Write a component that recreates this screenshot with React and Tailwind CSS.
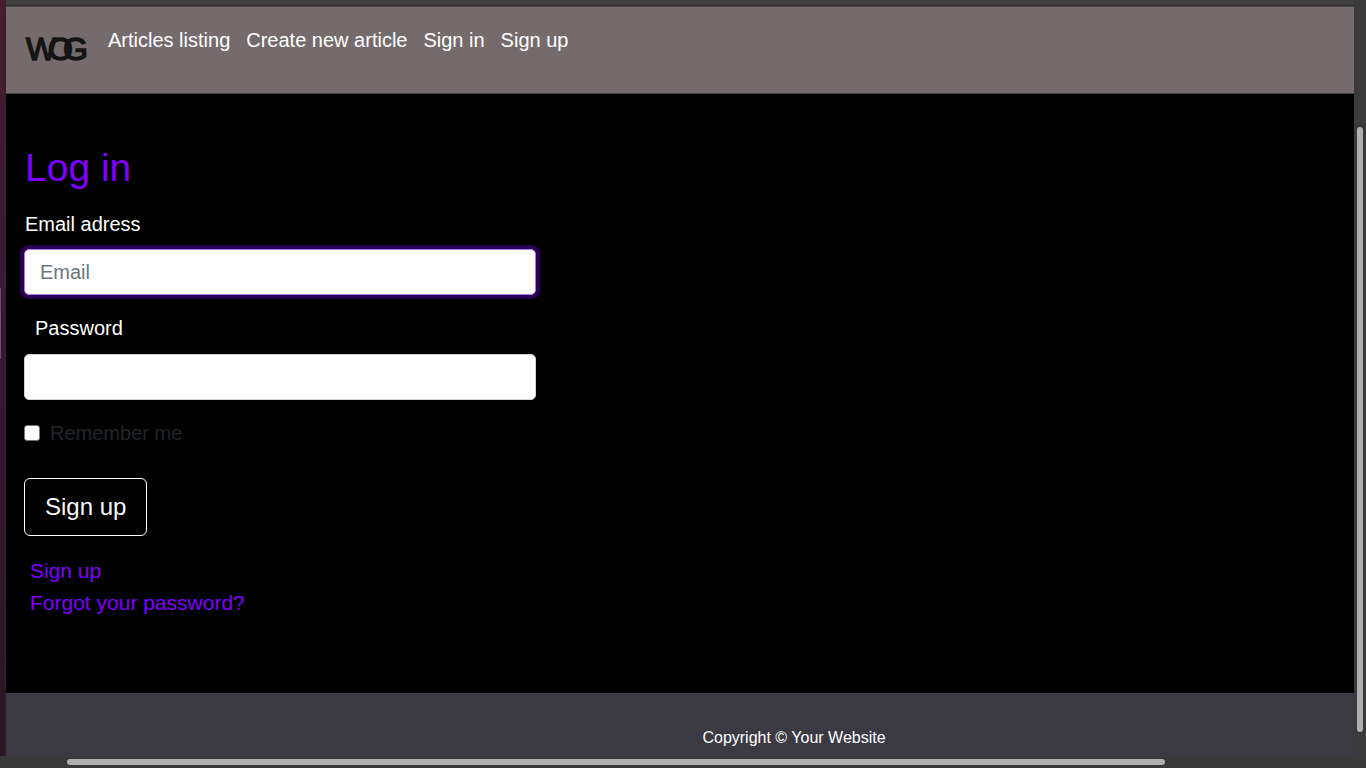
const navLinks = ["Articles listing", "Create new article", "Sign in", "Sign up"];

function Logo() {
  return (
    <svg
      className="h-10 w-[72px]"
      viewBox="0 0 72 40"
      role="img"
      aria-label="WOG"
      fill="#151415"
      stroke="#151415"
      strokeWidth="1.5"
      fontFamily="Liberation Sans, Arial, sans-serif"
      fontSize="32"
    >
      <text x="4 26 41" y="32">WOG</text>
    </svg>
  );
}

function Navbar() {
  return (
    <header className="flex h-[88px] shrink-0 items-start gap-4 border-y border-[#4d4546] bg-[#766b6c] pl-4">
      <a href="#home" className="mt-[21px] block">
        <Logo />
      </a>
      <nav className="-ml-[2px] mt-[18px] flex gap-4 text-[20px] leading-[30px] text-white">
        {navLinks.map((label) => (
          <a key={label} href="#nav">{label}</a>
        ))}
      </nav>
    </header>
  );
}

function LoginForm() {
  return (
    <main className="flex-1 bg-black px-[18px] pt-[50px]">
      <h1 className="pl-[1px] text-[39px] leading-[48px] text-[#7f00ff]">Log in</h1>
      <form className="w-[39%] text-[20px] leading-[30px]">
        <label htmlFor="email" className="mt-[17px] block pl-[1px] text-white">
          Email adress
        </label>
        <input
          id="email"
          type="email"
          placeholder="Email"
          className="mt-[10px] block h-[46px] w-full rounded-[5px] border border-[#9b7ff0] bg-white px-[15px] text-black shadow-[0_0_0_4px_#2b0052] outline-none placeholder:text-[#6c757d]"
        />
        <label htmlFor="password" className="mt-[18px] block pl-[11px] text-white">
          Password
        </label>
        <input
          id="password"
          type="password"
          className="mt-[11px] block h-[46px] w-full rounded-[5px] border border-[#ced4da] bg-white px-[15px] text-black outline-none"
        />
        <div className="mt-[18px] flex items-center gap-[10px]">
          <input
            id="remember"
            type="checkbox"
            className="size-4 appearance-none rounded-[3px] border border-[#767676] bg-white checked:bg-[#7f00ff]"
          />
          <label htmlFor="remember" className="text-[#212529]">Remember me</label>
        </div>
        <button
          type="button"
          className="mt-[30px] block h-[58px] rounded-md border border-white px-5 text-[24px] text-[#f8f9fa]"
        >
          Sign up
        </button>
      </form>
      <div className="mt-[19px] flex flex-col items-start pl-[6px] text-[21px] leading-[32px] text-[#7f00ff]">
        <a href="#signup">Sign up</a>
        <a href="#forgot">Forgot your password?</a>
      </div>
    </main>
  );
}

export default function App() {
  return (
    <div className="flex h-screen flex-col bg-[#3a3a3a] font-['Liberation_Sans',Arial,sans-serif]">
      <div className="flex min-h-0 flex-1">
        <div className="w-[6px] shrink-0 border-r border-[#29242a] bg-linear-to-b from-[#451d2e] via-[#3a1435] to-[#2b1620]">
          <div className="mt-[288px] h-[71px] w-px bg-[#69506a]" />
        </div>
        <div className="flex min-w-0 flex-1 flex-col">
          <div className="h-[6px] shrink-0 border-b border-[#292929] bg-[#404040]" />
          <Navbar />
          <LoginForm />
          <footer className="flex h-[63px] shrink-0 justify-center bg-[#3b3a43] pl-[228px] pt-[33px] text-[16px] leading-[24px] text-white">
            <p>Copyright © Your Website</p>
          </footer>
        </div>
        <div className="flex w-3 shrink-0 justify-center bg-[#3a3a3a] pb-6 pt-[127px]">
          <div className="w-[6px] rounded-full bg-[#afafaf]" />
        </div>
      </div>
      <div className="flex h-3 shrink-0 items-center bg-[#393939] pl-[67px] pr-[201px]">
        <div className="h-[6px] w-full rounded-full bg-[#afafaf]" />
      </div>
    </div>
  );
}
